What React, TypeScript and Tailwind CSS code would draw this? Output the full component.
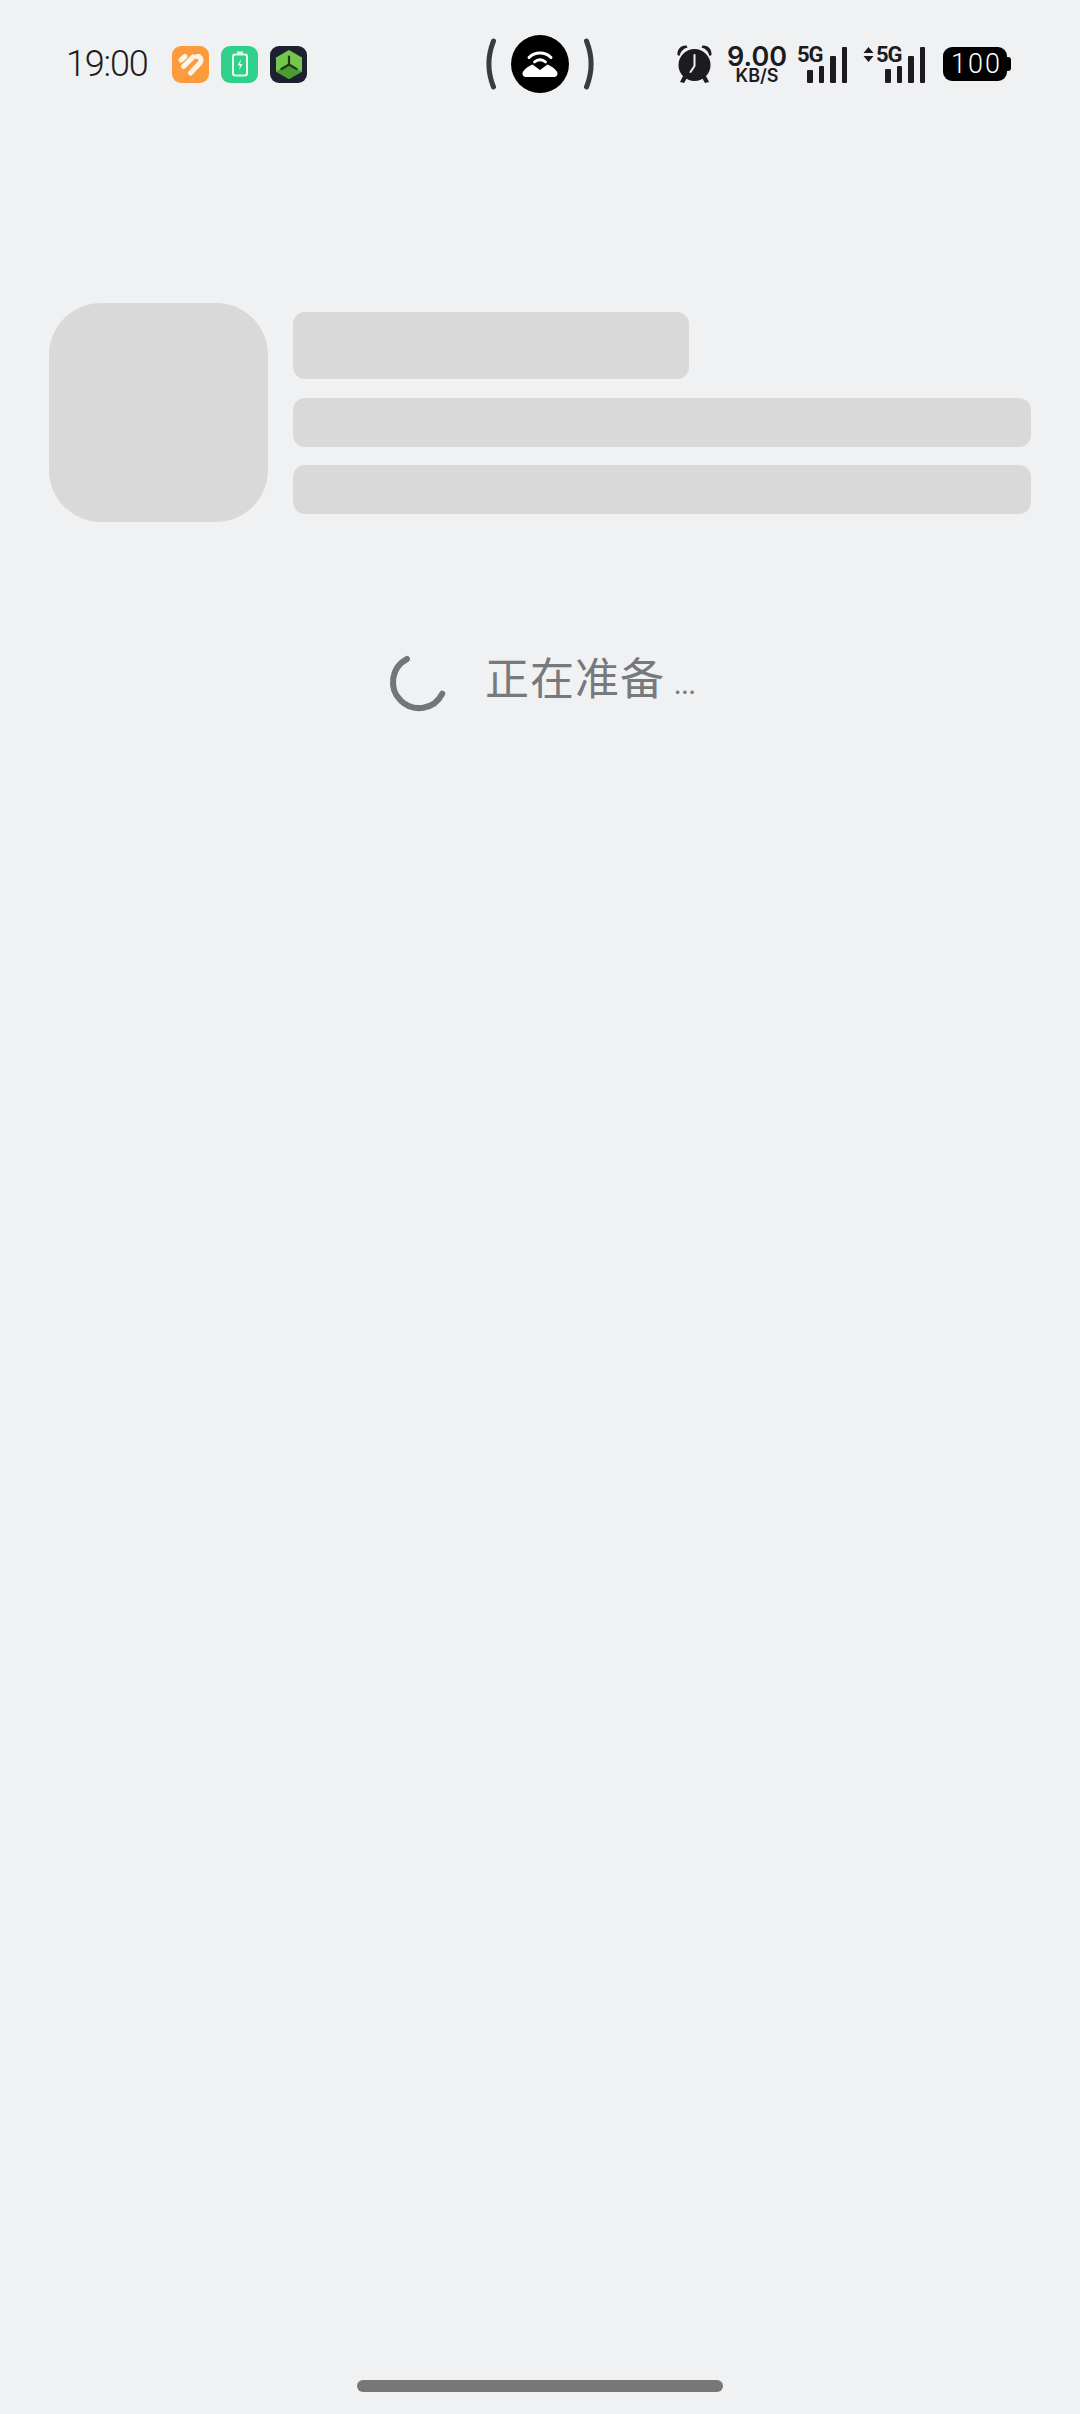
import React from "react";

function SignalBars({ heights }: { heights: number[] }) {
  return (
    <div className="flex items-end gap-[6px]">
      {heights.map((h, i) => (
        <div key={i} className="w-[5.5px] rounded-[1px] bg-[#1c1c1e]" style={{ height: h }} />
      ))}
    </div>
  );
}

function Signal1() {
  return (
    <div className="relative ml-[9px] flex h-[37px] w-[50px] items-end justify-end">
      <span className="absolute left-0 top-[-1px] text-[22px] font-bold leading-[20px] tracking-[-1px] text-[#1c1c1e] [font-family:Roboto,sans-serif]">5G</span>
      <SignalBars heights={[13, 17, 27, 36]} />
    </div>
  );
}

function Signal2() {
  return (
    <div className="relative ml-[16px] flex h-[37px] w-[62px] items-end justify-end">
      <svg className="absolute left-0 top-[1px]" width="11" height="15" viewBox="0 0 11 15">
        <path d="M5.5 0 L10.5 6 H0.5 Z M0.5 9 H10.5 L5.5 15 Z" fill="#1c1c1e" />
      </svg>
      <span className="absolute left-[13px] top-[-1px] text-[22px] font-bold leading-[20px] tracking-[-1px] text-[#1c1c1e] [font-family:Roboto,sans-serif]">5G</span>
      <SignalBars heights={[14, 17, 27, 36]} />
    </div>
  );
}

function HeartIcon() {
  return (
    <div className="flex h-[37px] w-[37px] items-center justify-center rounded-[9px] bg-[#fd9a3c]">
      <svg width="37" height="37" viewBox="0 0 37 37" fill="none" stroke="#fdf3e7" strokeWidth="5" strokeLinecap="round" strokeLinejoin="round">
        <path d="M9 14 L13 10.5" />
        <path d="M11.5 20.5 L21 11" />
        <path d="M18.5 27 L28 17 C30.5 13.5 27.5 9.5 25 10.5" />
      </svg>
    </div>
  );
}

function BatteryAppIcon() {
  return (
    <div className="ml-[12px] flex h-[37px] w-[37px] items-center justify-center rounded-[9px] bg-[#2fd18a]">
      <svg width="20" height="26" viewBox="0 0 20 26" fill="none">
        <rect x="7" y="0.5" width="6" height="3" fill="#dff7ec" />
        <rect x="3" y="3.5" width="14" height="21" rx="2" stroke="#e6f9f0" strokeWidth="2" />
        <path d="M11 8 L7.5 14.5 H10 L9 19.5 L12.5 13 H10 Z" fill="#e6f9f0" />
      </svg>
    </div>
  );
}

function CubeIcon() {
  return (
    <div className="ml-[12px] flex h-[37px] w-[37px] items-center justify-center rounded-[9px] bg-[#1d2030]">
      <svg width="28" height="31" viewBox="0 0 28 31">
        <path d="M14 1 L27 8.5 V22.5 L14 30 L1 22.5 V8.5 Z" fill="#74c64c" />
        <path d="M1 22.5 L14 15 L27 22.5 L14 30 Z" fill="#4d9a34" />
        <path d="M14 7.5 V15.5 M14 15.5 L6.5 20 M14 15.5 L21.5 20" stroke="#1d3a1a" strokeWidth="2.2" strokeLinecap="round" />
      </svg>
    </div>
  );
}

function Paren({ flip }: { flip?: boolean }) {
  return (
    <svg className={flip ? "-scale-x-100" : ""} width="10" height="52" viewBox="0 0 10 52" fill="none">
      <path d="M7.5 3 C1.5 18 1.5 34 7.5 49" stroke="#3a3b3d" strokeWidth="5" strokeLinecap="round" />
    </svg>
  );
}

function HotspotBadge() {
  return (
    <div className="mx-[15px] flex h-[58px] w-[58px] items-center justify-center rounded-full bg-black">
      <svg width="36" height="27" viewBox="0 0 36 27" fill="none">
        <path d="M7 6.5 C13 0.5 23 0.5 29 6.5" stroke="white" strokeWidth="3" strokeLinecap="round" />
        <path d="M12.5 11 C15.5 8 20.5 8 23.5 11" stroke="white" strokeWidth="2.8" strokeLinecap="round" />
        <path d="M4 26 H32 C35.5 26 36.5 22.5 34.5 20 C32.5 17 29 15 25.5 13.5 L18 19 L10.5 13.5 C7 15 3.5 17 1.5 20 C-0.5 22.5 0.5 26 4 26 Z" fill="white" />
      </svg>
    </div>
  );
}

function AlarmIcon() {
  return (
    <svg className="ml-[82px]" width="37" height="40" viewBox="0 0 37 40">
      <path d="M1.5 11 C1 5 5 1 10.5 1.5 L11.5 3.5 C7.5 4.5 4.5 7.5 3.5 12 Z" fill="#1c1c1e" />
      <path d="M35.5 11 C36 5 32 1 26.5 1.5 L25.5 3.5 C29.5 4.5 32.5 7.5 33.5 12 Z" fill="#1c1c1e" />
      <path d="M7 32 L4 38 L8 39 L11 34 Z M30 32 L33 38 L29 39 L26 34 Z" fill="#1c1c1e" />
      <circle cx="18.5" cy="21" r="16" fill="#1c1c1e" />
      <path d="M18.5 11 V22 L14.5 28" stroke="#f0f1f3" strokeWidth="2" fill="none" strokeLinecap="round" strokeLinejoin="round" />
    </svg>
  );
}

function NetSpeed() {
  return (
    <div className="ml-[13px] flex w-[62px] flex-col items-center text-[#1c1c1e] [font-family:Inter,sans-serif]">
      <span className="whitespace-nowrap text-[27px] font-semibold leading-[23px]">9.00</span>
      <span className="whitespace-nowrap text-[18px] font-semibold leading-[15px]">KB/S</span>
    </div>
  );
}

function Battery() {
  return (
    <div className="ml-[18px] flex items-center">
      <div className="flex h-[34px] w-[64px] items-center justify-center rounded-[9px] bg-black pl-[3px] text-[27px] font-light leading-none tracking-[2px] text-white [font-family:Roboto,sans-serif]">
        100
      </div>
      <div className="h-[14px] w-[4px] rounded-r-[3px] bg-black" />
    </div>
  );
}

export default function App() {
  return (
    <div className="flex h-[2414px] w-[1080px] flex-col bg-[#f0f1f3]">
      <div className="flex h-[128px] items-center pl-[66px]">
        <div className="w-[80px] whitespace-nowrap text-[36px] font-light leading-none tracking-[-1.2px] text-[#1c1c1e] [font-family:Roboto,sans-serif]">
          19:00
        </div>
        <div className="ml-[26px] flex">
          <HeartIcon />
          <BatteryAppIcon />
          <CubeIcon />
        </div>
        <div className="ml-[179px] flex items-center">
          <Paren />
          <HotspotBadge />
          <Paren flip />
        </div>
        <AlarmIcon />
        <NetSpeed />
        <Signal1 />
        <Signal2 />
        <Battery />
      </div>

      <div className="mt-[175px] flex gap-[25px] pl-[49px] pr-[49px]">
        <div className="h-[219px] w-[219px] shrink-0 rounded-[52px] bg-[#d9d9d9]" />
        <div className="flex flex-1 flex-col pt-[9px]">
          <div className="h-[67px] w-[396px] rounded-[12px] bg-[#d9d9d9]" />
          <div className="mt-[19px] h-[49px] rounded-[12px] bg-[#d9d9d9]" />
          <div className="mt-[18px] h-[49px] rounded-[12px] bg-[#d9d9d9]" />
        </div>
      </div>

      <div className="mt-[128px] flex items-center gap-[34px] pl-[387px]">
        <svg width="64" height="64" viewBox="0 0 64 64" fill="none">
          <path d="M20 9 A26 26 0 1 0 55.3 43.6" stroke="#737577" strokeWidth="6" strokeLinecap="round" />
        </svg>
        <div className="-mt-[12px] flex items-end whitespace-nowrap text-[#77797b] [font-family:'Noto_Sans_CJK_SC',sans-serif]">
          <span className="text-[44px] leading-none tracking-[1px]">正在准备</span>
          <span className="ml-[9px] text-[26px] leading-[30px]">...</span>
        </div>
      </div>

      <div className="mb-[22px] mt-auto h-[12px] w-[366px] self-center rounded-full bg-[#777777]" />
    </div>
  );
}
